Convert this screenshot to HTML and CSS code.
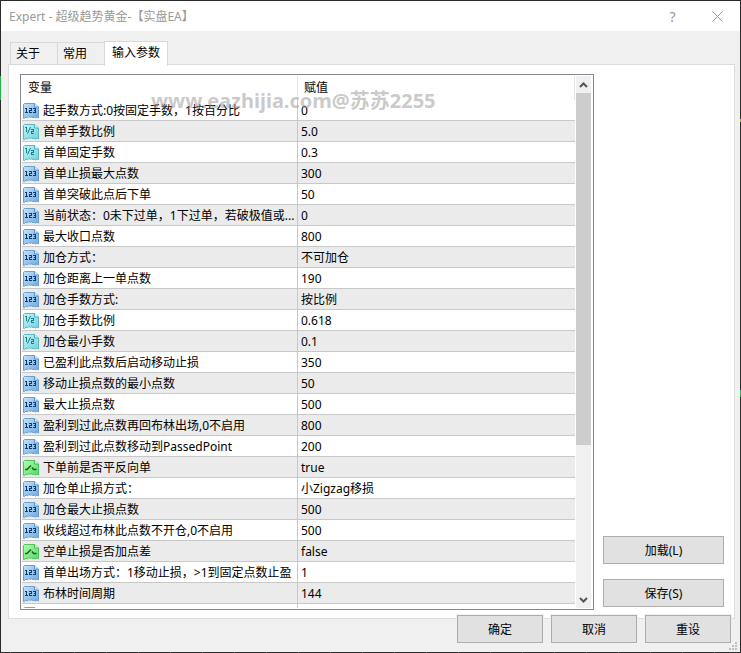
FILE: index.html
```html
<!DOCTYPE html>
<html lang="zh-CN">
<head>
    <meta charset="UTF-8">
    <meta name="viewport" content="width=device-width, initial-scale=1.0">
    <title>Expert - 超级趋势黄金-【实盘EA】</title>
    <link rel="stylesheet" href="styles.css">
</head>
<body>
    <svg class="sprite" width="0" height="0" aria-hidden="true">
        <defs>
            <linearGradient id="fill-int" x1="0" y1="0" x2="1" y2="1">
                <stop offset="0" stop-color="#c4e3fb"/>
                <stop offset="1" stop-color="#6fa9e2"/>
            </linearGradient>
            <linearGradient id="fill-real" x1="0" y1="0" x2="1" y2="1">
                <stop offset="0" stop-color="#c3f5f7"/>
                <stop offset="1" stop-color="#6fd3de"/>
            </linearGradient>
            <linearGradient id="fill-bool" x1="0" y1="0" x2="1" y2="1">
                <stop offset="0" stop-color="#b5fab2"/>
                <stop offset="1" stop-color="#56d967"/>
            </linearGradient>
        </defs>
        <symbol id="icon-int" viewBox="0 0 16 16">
            <path d="M.5 1.500l1-1h10l4 3.500v11l-1.500-1-1.500 1-1.500-1-1 1-1-1.500-1.500 1-1.500-1-1.500 1.500-1.500-1-1.500 1.500h-1z" fill="url(#fill-int)" stroke="#6a9fd0"/>
            <path d="M11.500 .5v3.500h4" fill="#e0f1fe" stroke="#5a93c8"/>
            <path d="M2 5h2v4h1v1H2V9h1V6H2zM6 5h3v3H7v1h2v1H6V7h2V6H6zM10 5h3v5h-3V9h2V8h-1V7h1V6h-2z" fill="#0f3c6e"/>
        </symbol>
        <symbol id="icon-real" viewBox="0 0 16 16">
            <path d="M.5 1.500l1-1h10l4 3.500v11l-1.500-1-1.500 1-1.500-1-1 1-1-1.500-1.500 1-1.500-1-1.500 1.500-1.500-1-1.500 1.500h-1z" fill="url(#fill-real)" stroke="#5cb9c3"/>
            <path d="M11.500 .5v3.500h4" fill="#e2fdfd" stroke="#4aafb9"/>
            <path d="M2 3h2v5H3V4H2zM8 5h3v3H9v1h2v1H8V7h2V6H8z" fill="#15808c"/>
            <path d="M7.500 3l-3 6.500" fill="none" stroke="#15808c"/>
        </symbol>
        <symbol id="icon-bool" viewBox="0 0 16 16">
            <path d="M.5 1.500l1-1h10l4 3.500v11l-1.500-1-1.500 1-1.500-1-1 1-1-1.500-1.500 1-1.500-1-1.500 1.500-1.500-1-1.500 1.500h-1z" fill="url(#fill-bool)" stroke="#4fc45e"/>
            <path d="M11.500 .5v3.500h4" fill="#dcffdc" stroke="#3fba50"/>
            <path d="M2 9.500h2l4-4M9 7.500l1.500 2h3" fill="none" stroke="#0d6b1c" stroke-width="1.500"/>
        </symbol>
    </svg>

    <div class="dialog">
        <header class="titlebar">
            <h1>Expert - 超级趋势黄金-【实盘EA】</h1>
            <button class="title-btn" type="button" aria-label="帮助">?</button>
            <button class="title-btn" type="button" aria-label="关闭">
                <svg width="11" height="11" viewBox="0 0 11 11"><path d="M.5 .5l10 10M10.500 .5l-10 10" stroke="#999" fill="none"/></svg>
            </button>
        </header>

        <nav class="tabs">
            <button class="tab" type="button">关于</button>
            <button class="tab" type="button">常用</button>
            <button class="tab active" type="button">输入参数</button>
        </nav>

        <main class="panel">
            <div class="list">
                <div class="list-view">
                    <table class="params">
                        <thead>
                            <tr><th class="name">变量</th><th>赋值</th></tr>
                        </thead>
                        <tbody id="rows"></tbody>
                    </table>
                </div>
                <div class="scrollbar">
                    <button class="arrow" type="button" aria-label="向上">
                        <svg width="9" height="6" viewBox="0 0 9 6"><path d="M1 5l3.500-3.500L8 5" fill="none" stroke="#555" stroke-width="2"/></svg>
                    </button>
                    <div class="thumb"></div>
                    <div class="track"></div>
                    <button class="arrow" type="button" aria-label="向下">
                        <svg width="9" height="6" viewBox="0 0 9 6"><path d="M1 1l3.500 3.500L8 1" fill="none" stroke="#555" stroke-width="2"/></svg>
                    </button>
                </div>
                <div class="watermark">www.eazhijia.com@苏苏2255</div>
            </div>
            <div class="side">
                <button class="btn" type="button">加载(L)</button>
                <button class="btn" type="button">保存(S)</button>
            </div>
        </main>

        <footer class="footer">
            <button class="btn" type="button">确定</button>
            <button class="btn" type="button">取消</button>
            <button class="btn" type="button">重设</button>
        </footer>
        <svg class="grip" width="8" height="8" viewBox="0 0 8 8"><path d="M6 0h2v2H6zM3 3h2v2H3zM6 3h2v2H6zM0 6h2v2H0zM3 6h2v2H3zM6 6h2v2H6z" fill="#bfbfbf"/></svg>
    </div>

    <script src="script.js"></script>
</body>
</html>
```
FILE: styles.css
```css
* {
    box-sizing: border-box;
}
body {
    margin: 0;
    height: 100vh;
    padding: 1px;
    display: flex;
    font-family: "Noto Sans", "Noto Sans CJK SC", sans-serif;
    font-size: 12px;
    color: #000;
    background:
        linear-gradient(#22b14c, #22b14c) 0 76px / 1px 24px no-repeat,
        linear-gradient(#b5b500, #b5b500) 100% 119px / 1px 3px no-repeat,
        linear-gradient(#22b14c, #22b14c) 100% 390px / 1px 7px no-repeat,
        linear-gradient(90deg, #666 1px, transparent 1px) 10px 100% / 32px 1px repeat-x,
        #2b2b2b;
}
button {
    font: inherit;
    color: inherit;
    padding: 0;
}
.sprite {
    position: absolute;
}
.dialog {
    position: relative;
    flex: 1;
    min-width: 0;
    display: flex;
    flex-direction: column;
    background: #f0f0f0;
}
.titlebar {
    display: flex;
    align-items: center;
    height: 30px;
    padding-left: 8px;
    background: #fff;
    color: #999;
}
.titlebar h1 {
    flex: 1;
    margin: 0;
    font-size: 12px;
    font-weight: 400;
}
.title-btn {
    display: flex;
    align-items: center;
    justify-content: center;
    width: 45px;
    height: 30px;
    border: 0;
    background: none;
    font-size: 14px;
}
.tabs {
    display: flex;
    align-items: flex-end;
    height: 34px;
    padding-left: 9px;
    position: relative;
    z-index: 1;
}
.tab {
    width: 48px;
    height: 23px;
    margin-right: -1px;
    padding: 0 5px 2px;
    text-align: left;
    border: 1px solid #d9d9d9;
    background: #f0f0f0;
}
.tab.active {
    width: 64px;
    height: 25px;
    margin-bottom: -1px;
    padding: 0 7px 4px;
    border-bottom: 0;
    background: #fff;
}
.panel {
    flex: 1;
    min-height: 0;
    display: flex;
    gap: 9px;
    margin: -1px 5px 0 7px;
    padding: 9px 10px 8px 11px;
    border: 1px solid #dcdcdc;
    background: #fff;
}
.list {
    position: relative;
    flex: 1;
    min-width: 0;
    display: flex;
    padding: 1px;
    border: 1px solid #828790;
}
.list-view {
    flex: 1;
    min-width: 0;
    overflow: hidden;
}
.params {
    width: 100%;
    table-layout: fixed;
    border-collapse: separate;
    border-spacing: 0;
}
.params th,
.params td {
    height: 21px;
    padding: 2px 3px 0;
    line-height: 18px;
    text-align: left;
    font-weight: 400;
    white-space: nowrap;
    border-bottom: 1px solid #c8c8c8;
}
.params th {
    height: 24px;
    padding: 0 6px;
    border-bottom: 0;
    border-right: 1px solid #e5e5e5;
}
.params .name {
    width: 276px;
    border-right: 1px solid #c8c8c8;
}
.params th.name {
    border-right-color: #e5e5e5;
}
.params tbody tr:nth-child(even) {
    background: #ebebeb;
}
.params td.name {
    padding: 2px 1px 0;
}
.cell {
    display: flex;
    align-items: center;
    gap: 4px;
    height: 18px;
}
.cell svg {
    flex: none;
}
.cell span {
    overflow: hidden;
    text-overflow: ellipsis;
}
.scrollbar {
    display: flex;
    flex-direction: column;
    width: 15px;
    margin: 0 1px;
    background: #f0f0f0;
}
.arrow {
    display: flex;
    align-items: center;
    justify-content: center;
    height: 17px;
    border: 0;
    background: none;
}
.thumb {
    flex: 12;
    background: #cdcdcd;
}
.track {
    flex: 5;
}
.watermark {
    position: absolute;
    left: 130px;
    top: 12px;
    font-size: 20px;
    line-height: 28px;
    font-weight: 700;
    color: rgba(150, 150, 150, 0.5);
    white-space: nowrap;
    pointer-events: none;
}
.side {
    display: flex;
    flex-direction: column;
    justify-content: flex-end;
    gap: 15px;
    width: 121px;
    padding-bottom: 3px;
}
.btn {
    height: 28px;
    border: 1px solid #adadad;
    background: #e1e1e1;
}
.footer {
    position: relative;
    display: flex;
    justify-content: flex-end;
    gap: 8px;
    margin-top: -4px;
    padding: 0 9px 9px;
}
.footer .btn {
    width: 86px;
    box-shadow: 0 0 0 1px #f0f0f0;
}
.grip {
    position: absolute;
    right: 3px;
    bottom: 2px;
}
```
FILE: script.js
```js
const params = [
    ['int', '起手数方式:0按固定手数，1按百分比', '0'],
    ['real', '首单手数比例', '5.0'],
    ['real', '首单固定手数', '0.3'],
    ['int', '首单止损最大点数', '300'],
    ['int', '首单突破此点后下单', '50'],
    ['int', '当前状态：0未下过单，1下过单，若破极值或...', '0'],
    ['int', '最大收口点数', '800'],
    ['int', '加仓方式：', '不可加仓'],
    ['int', '加仓距离上一单点数', '190'],
    ['int', '加仓手数方式:', '按比例'],
    ['real', '加仓手数比例', '0.618'],
    ['real', '加仓最小手数', '0.1'],
    ['int', '已盈利此点数后启动移动止损', '350'],
    ['int', '移动止损点数的最小点数', '50'],
    ['int', '最大止损点数', '500'],
    ['int', '盈利到过此点数再回布林出场,0不启用', '800'],
    ['int', '盈利到过此点数移动到PassedPoint', '200'],
    ['bool', '下单前是否平反向单', 'true'],
    ['int', '加仓单止损方式：', '小Zigzag移损'],
    ['int', '加仓最大止损点数', '500'],
    ['int', '收线超过布林此点数不开仓,0不启用', '500'],
    ['bool', '空单止损是否加点差', 'false'],
    ['int', '首单出场方式：1移动止损，>1到固定点数止盈', '1'],
    ['int', '布林时间周期', '144'],
    ['real', '', '']
];

document.getElementById('rows').innerHTML = params.map(([type, name, value]) => `
    <tr>
        <td class="name"><div class="cell"><svg width="16" height="16"><use href="#icon-${type}"/></svg><span>${name.replace('>', '&gt;')}</span></div></td>
        <td>${value}</td>
    </tr>`).join('');
```
